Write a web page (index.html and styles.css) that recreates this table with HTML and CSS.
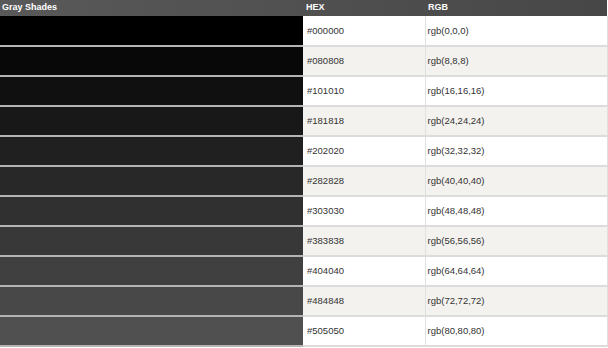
FILE: index.html
```html
<!DOCTYPE html>
<html>
<head>
<meta charset="utf-8">
<link rel="stylesheet" href="styles.css">
</head>
<body>
<table class="shades">
  <thead>
    <tr>
      <th class="col-swatch">Gray Shades</th>
      <th class="col-hex">HEX</th>
      <th class="col-rgb">RGB</th>
    </tr>
  </thead>
  <tbody>
    <tr><td class="swatch" style="background:#000000"></td><td class="hex">#000000</td><td class="rgb">rgb(0,0,0)</td></tr>
    <tr><td class="swatch" style="background:#080808"></td><td class="hex">#080808</td><td class="rgb">rgb(8,8,8)</td></tr>
    <tr><td class="swatch" style="background:#101010"></td><td class="hex">#101010</td><td class="rgb">rgb(16,16,16)</td></tr>
    <tr><td class="swatch" style="background:#181818"></td><td class="hex">#181818</td><td class="rgb">rgb(24,24,24)</td></tr>
    <tr><td class="swatch" style="background:#202020"></td><td class="hex">#202020</td><td class="rgb">rgb(32,32,32)</td></tr>
    <tr><td class="swatch" style="background:#282828"></td><td class="hex">#282828</td><td class="rgb">rgb(40,40,40)</td></tr>
    <tr><td class="swatch" style="background:#303030"></td><td class="hex">#303030</td><td class="rgb">rgb(48,48,48)</td></tr>
    <tr><td class="swatch" style="background:#383838"></td><td class="hex">#383838</td><td class="rgb">rgb(56,56,56)</td></tr>
    <tr><td class="swatch" style="background:#404040"></td><td class="hex">#404040</td><td class="rgb">rgb(64,64,64)</td></tr>
    <tr><td class="swatch" style="background:#484848"></td><td class="hex">#484848</td><td class="rgb">rgb(72,72,72)</td></tr>
    <tr><td class="swatch" style="background:#505050"></td><td class="hex">#505050</td><td class="rgb">rgb(80,80,80)</td></tr>
  </tbody>
</table>
</body>
</html>
```
FILE: styles.css
```css
html, body {
  margin: 0;
  padding: 0;
  background: #ffffff;
}

.shades {
  border-collapse: collapse;
  table-layout: fixed;
  width: 607px;
  font-family: "Liberation Sans", Arial, Helvetica, sans-serif;
}

.shades th,
.shades td {
  box-sizing: border-box;
}

.shades thead tr {
  background: linear-gradient(to right, #595959, #474747);
}

.shades th {
  height: 16px;
  padding: 0 0 1px 3px;
  text-align: left;
  font-size: 9px;
  font-weight: bold;
  color: #ffffff;
  line-height: 15px;
  vertical-align: middle;
}

.shades th.col-swatch {
  width: 303px;
  padding-left: 2px;
}

.shades th.col-hex {
  width: 122px;
}

.shades th.col-rgb {
  width: 182px;
}

.shades td {
  height: 30px;
  padding: 0 0 0 4px;
  border-bottom: 2px solid #dcdcdc;
  font-size: 9.5px;
  color: #333333;
  vertical-align: middle;
  line-height: 12px;
}

.shades td.swatch {
  padding: 0;
  border-bottom-color: #b4b4b4;
}

.shades td.rgb {
  padding-left: 2px;
  border-left: 1px solid #e0e0e0;
  border-right: 1px solid #e0e0e0;
}

.shades tbody tr:nth-child(even) td.hex,
.shades tbody tr:nth-child(even) td.rgb {
  background: #f3f2ee;
}
```
